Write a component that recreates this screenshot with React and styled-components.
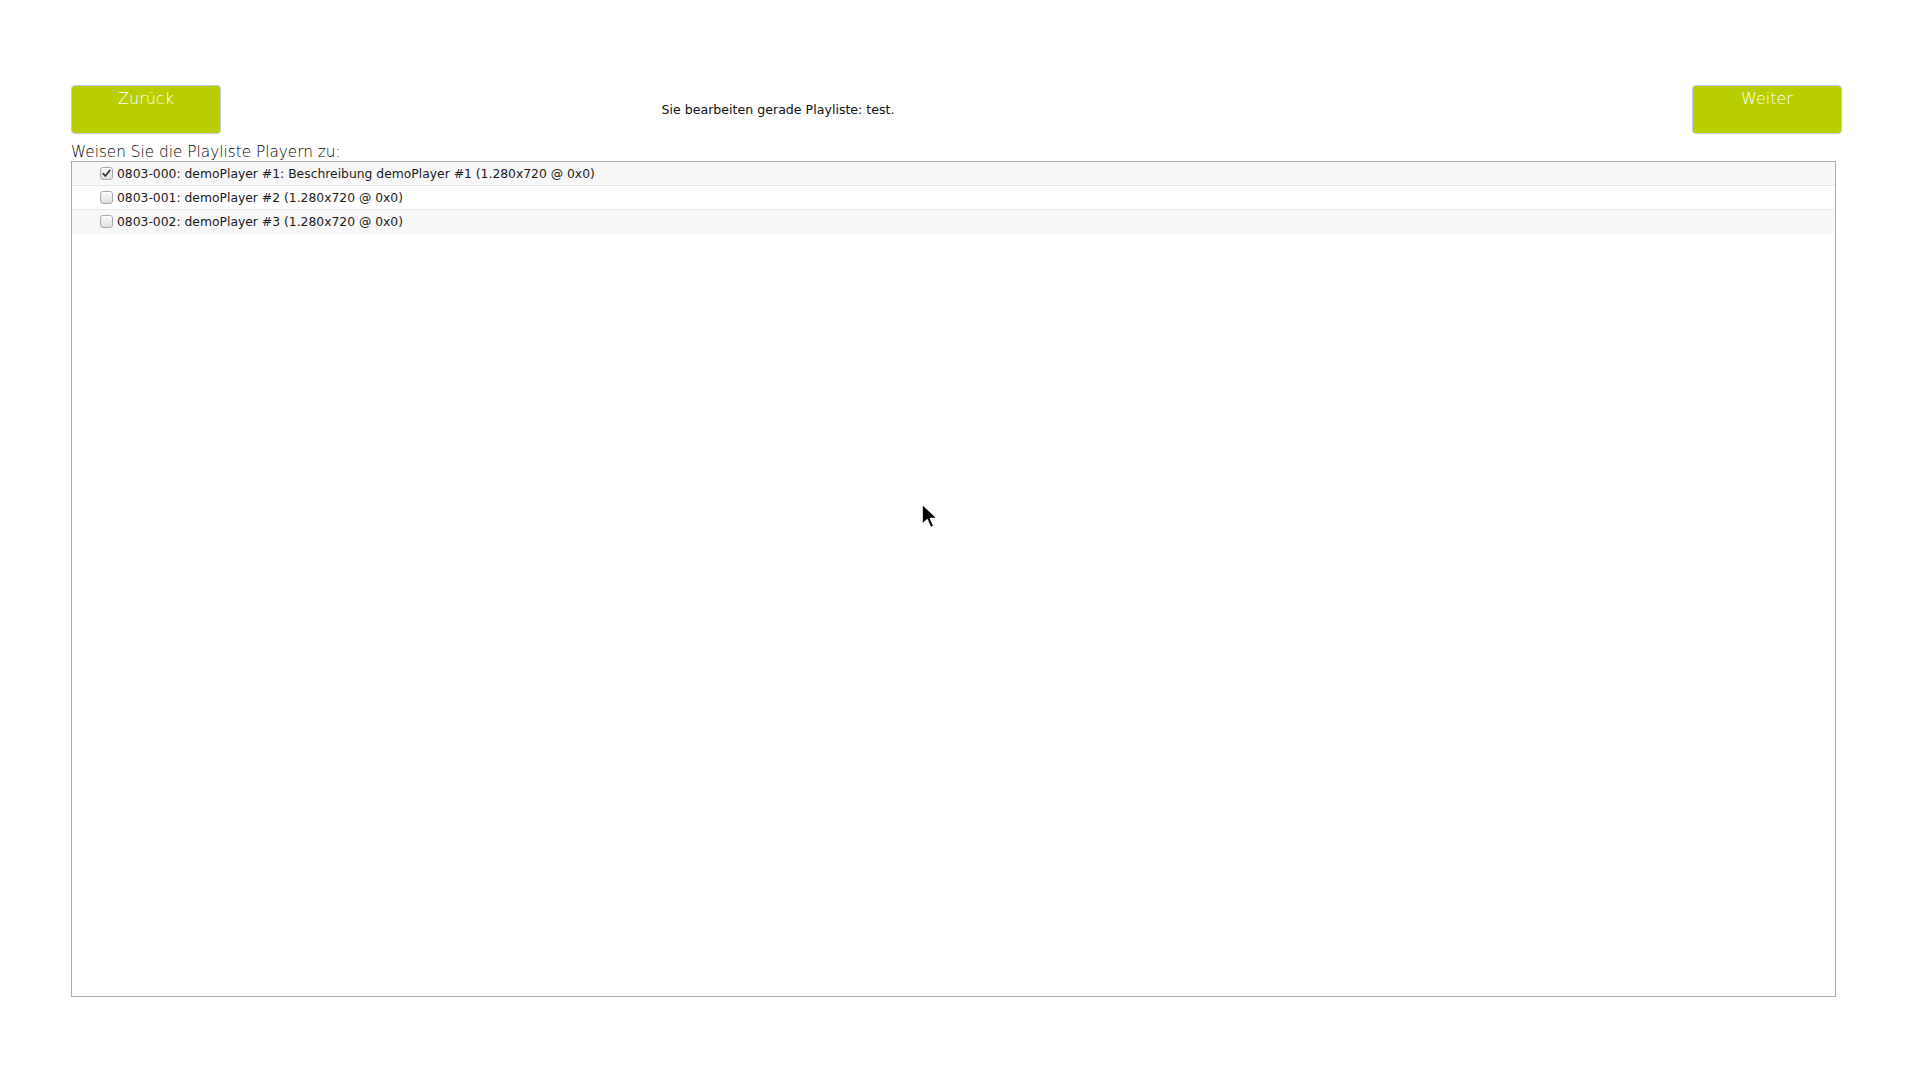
import styled, { createGlobalStyle } from 'styled-components'

const players = [
  { id: '0803-000', label: 'demoPlayer #1: Beschreibung demoPlayer #1 (1.280x720 @ 0x0)', checked: true },
  { id: '0803-001', label: 'demoPlayer #2 (1.280x720 @ 0x0)', checked: false },
  { id: '0803-002', label: 'demoPlayer #3 (1.280x720 @ 0x0)', checked: false },
]

const GlobalStyle = createGlobalStyle`
  html, body {
    margin: 0;
    padding: 0;
    background: #ffffff;
  }
  body {
    font-family: "DejaVu Sans", Verdana, sans-serif;
    color: #111;
  }
`

const Page = styled.div`
  position: relative;
  width: 1920px;
  height: 1080px;
  box-sizing: border-box;
  padding: 85px 78px 0 71px;
`

const Header = styled.div`
  display: grid;
  grid-template-columns: 150px 1fr 150px;
  align-items: center;
  height: 49px;
`

const NavButton = styled.button`
  box-sizing: border-box;
  height: 49px;
  width: 150px;
  margin: 0;
  padding: 3px 0 0;
  align-self: stretch;
  display: flex;
  justify-content: center;
  align-items: flex-start;
  background: #b9ce00;
  border: 1px solid #c4cbd8;
  border-radius: 4px;
  color: #ffffff;
  font-family: "DejaVu Sans", sans-serif;
  font-size: 16px;
  font-weight: 200;
  cursor: pointer;
`

const HeaderText = styled.div`
  text-align: center;
  padding-right: 357px;
  font-size: 12.6px;
  color: #111;
`

const Label = styled.div`
  margin-top: 9px;
  font-size: 15.3px;
  font-weight: 200;
  line-height: 18px;
  color: #000;
`

const ListBox = styled.div`
  box-sizing: border-box;
  width: calc(100% - 6px);
  height: 836px;
  border: 1px solid #ababab;
  background: #ffffff;
`

const Row = styled.label`
  display: flex;
  align-items: center;
  height: 23px;
  padding-left: 28px;
  border-bottom: 1px solid ${p => (p.$last ? 'transparent' : '#e7e7e7')};
  background: ${p => (p.$odd ? '#f7f7f7' : '#ffffff')};
  font-size: 12.35px;
  color: #1a1a1a;
  cursor: pointer;
`

const Box = styled.span`
  box-sizing: border-box;
  width: 13px;
  height: 13px;
  margin-right: 4px;
  display: inline-flex;
  align-items: center;
  justify-content: center;
  border: 1px solid #a9a9a9;
  border-radius: 3px;
  background: linear-gradient(#fbfbfb, #dedede);
  box-shadow: inset 0 1px 0 #ffffff;
`

const Cursor = styled.svg`
  position: absolute;
  left: 921px;
  top: 503px;
  pointer-events: none;
`

const Checkbox = ({ checked }) => (
  <Box>
    {checked && (
      <svg width="9" height="9" viewBox="0 0 9 9">
        <path d="M1.2 4.6 L3.4 7 L7.8 1.4" fill="none" stroke="#3c3c3c" strokeWidth="1.8" strokeLinecap="round" strokeLinejoin="round" />
      </svg>
    )}
  </Box>
)

const App = () => {
  return (
    <Page>
      <GlobalStyle />
      <Header>
        <NavButton>Zurück</NavButton>
        <HeaderText>Sie bearbeiten gerade Playliste: test.</HeaderText>
        <NavButton>Weiter</NavButton>
      </Header>
      <Label>Weisen Sie die Playliste Playern zu:</Label>
      <ListBox>
        {players.map((p, i) => (
          <Row key={p.id} $odd={i % 2 === 0} $last={i === players.length - 1}>
            <Checkbox checked={p.checked} />
            {p.id}: {p.label}
          </Row>
        ))}
      </ListBox>
      <Cursor width="18" height="27" viewBox="0 0 16 24">
        <path d="M1 1 L1 19 L5.5 14.8 L8.6 21.8 L11.4 20.6 L8.4 13.8 L14.4 13.6 Z" fill="#000" stroke="#fff" strokeWidth="1.2" strokeLinejoin="round" />
      </Cursor>
    </Page>
  )
}

export default App
